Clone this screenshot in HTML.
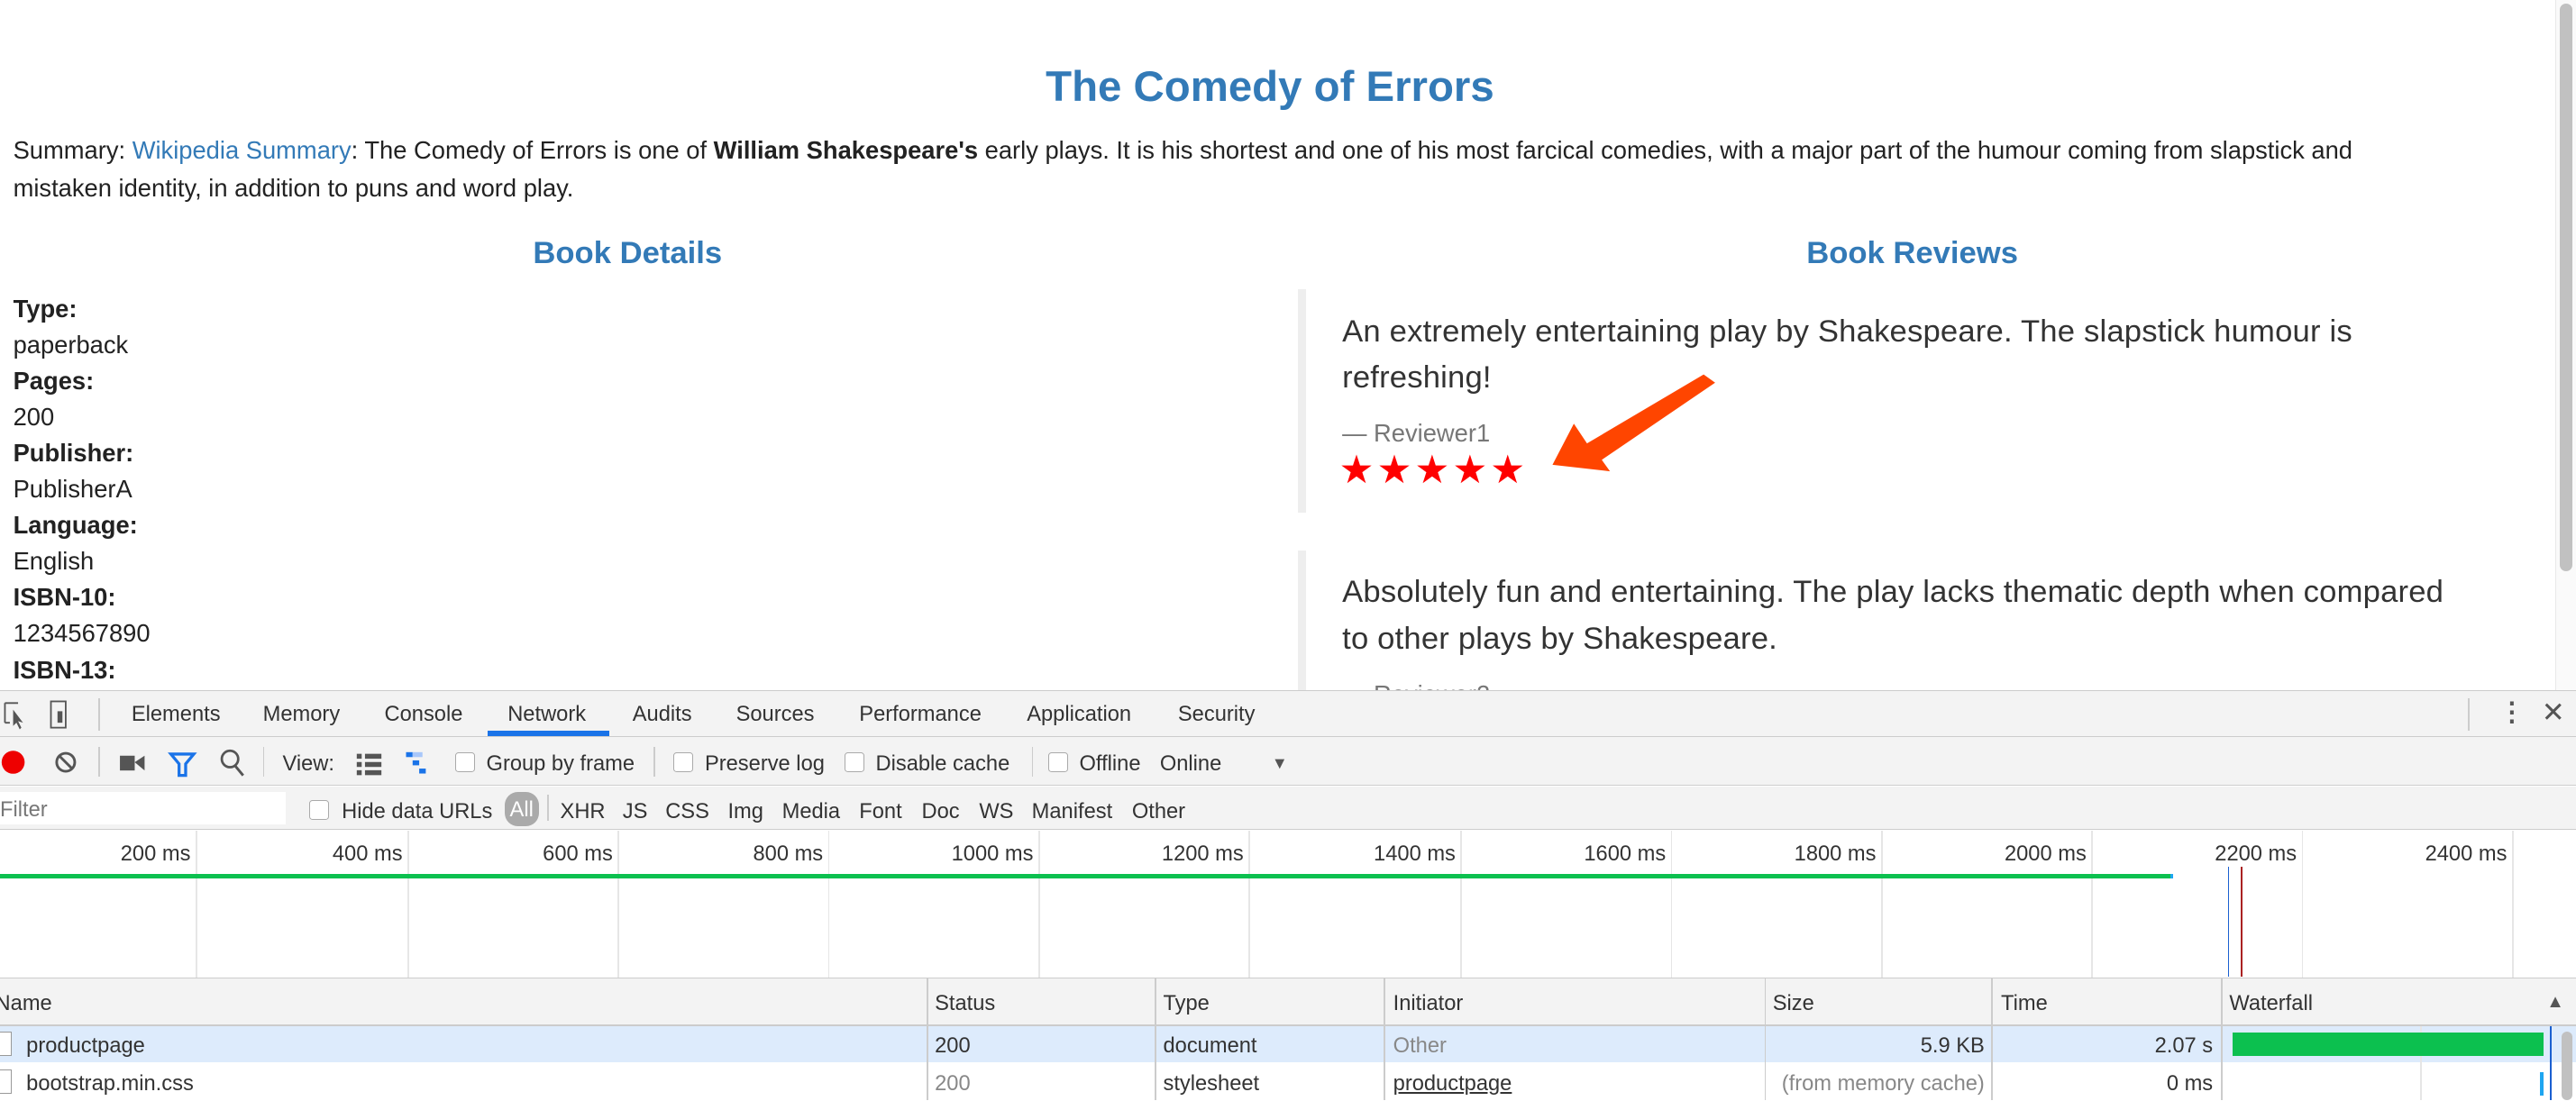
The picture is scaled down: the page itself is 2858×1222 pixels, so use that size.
<!DOCTYPE html>
<html><head><meta charset="utf-8"><style>
html,body{margin:0;padding:0;}
body{width:2858px;height:1222px;overflow:hidden;background:#fff;}
#w{width:1568px;height:670px;zoom:1.82270;position:relative;font-family:"Liberation Sans",Arial,sans-serif;color:#333;overflow:hidden;}
.a{position:absolute;white-space:nowrap;}
.blue{color:#337ab7;}
.t13{font-size:13px;color:#333;margin-top:2px;}
.cb{position:absolute;width:11px;height:11px;border:1px solid #aaa;border-radius:2px;background:#fff;margin-top:1px;}
.vl{position:absolute;width:1px;background:#ccc;}
.gl{position:absolute;top:506px;height:89px;width:1px;background:#e6e6e6;}
.tl{position:absolute;top:513px;font-size:13px;color:#333;text-align:right;width:100px;}
.ch{position:absolute;top:596px;height:28px;width:1px;background:#ccc;}
.cr{position:absolute;top:625px;height:45px;width:1px;background:#ccc;}
</style></head><body><div id="w">
<div class="a blue" style="left:0;width:1546px;text-align:center;top:38px;font-size:26px;font-weight:bold;">The Comedy of Errors</div>
<div class="a" style="left:8px;top:80px;font-size:15px;line-height:23px;color:#222;white-space:normal;width:1478px;">Summary: <span class="blue">Wikipedia Summary</span>: The Comedy of Errors is one of <b>William Shakespeare's</b> early plays. It is his shortest and one of his most farcical comedies, with a major part of the humour coming from slapstick and mistaken identity, in addition to puns and word play.</div>
<div class="a" style="right:0;top:0;width:12px;height:420px;background:#fafafa;border-left:1px solid #e8e8e8"></div>
<div class="a" style="left:1558px;top:2px;width:8px;height:346px;background:#c1c1c1;border-radius:4px"></div>
<div class="a blue" style="left:182px;width:400px;text-align:center;top:144px;font-size:19px;font-weight:bold;">Book Details</div>
<div class="a blue" style="left:964px;width:400px;text-align:center;top:144px;font-size:19px;font-weight:bold;">Book Reviews</div>
<div class="a" style="left:8px;top:177px;font-size:15px;line-height:22px;color:#222;">
<b>Type:</b><br>paperback<br><b>Pages:</b><br>200<br><b>Publisher:</b><br>PublisherA<br><b>Language:</b><br>English<br><b>ISBN-10:</b><br>1234567890<br><b>ISBN-13:</b></div>
<div class="a" style="left:790px;top:176px;width:5px;height:136px;background:#eee"></div>
<div class="a" style="left:790px;top:335px;width:5px;height:90px;background:#eee"></div>
<div class="a" style="left:817px;top:188px;font-size:19px;line-height:28px;color:#333;letter-spacing:0.1px">An extremely entertaining play by Shakespeare. The slapstick humour is<br>refreshing!</div>
<div class="a" style="left:817px;top:255px;font-size:15px;color:#777;">— Reviewer1</div>
<div class="a" style="left:815px;top:272px;font-size:24px;color:#f00;letter-spacing:1.5px;">★★★★★</div>
<div class="a" style="left:817px;top:347px;font-size:19px;line-height:28px;color:#333;letter-spacing:0.1px">Absolutely fun and entertaining. The play lacks thematic depth when compared<br>to other plays by Shakespeare.</div>
<div class="a" style="left:817px;top:414px;font-size:15px;color:#777;">— Reviewer2</div>
<svg class="a" style="left:0;top:0" width="1568" height="670">
<polygon points="1037,228 1044,233 975,280 980,287 945,283 958,258 966,270" fill="#ff4500"/>
<polygon points="1203,563 1207,561 1276,605 1280,596 1292,626 1260,622 1270,612" fill="#ff4500"/>
</svg>
<!-- devtools -->
<div class="a" style="left:0;top:420px;width:1568px;height:250px;background:#fff;border-top:1px solid #ccc"></div>
<div class="a" style="left:0;top:421px;width:1568px;height:27px;background:#f3f3f3;border-bottom:1px solid #ccc"></div>
<div class="a" style="left:0;top:449px;width:1568px;height:29px;background:#f3f3f3;border-bottom:1px solid #ccc"></div>
<div class="a" style="left:0;top:479px;width:1568px;height:26px;background:#f3f3f3;border-bottom:1px solid #ccc"></div>
<svg class="a" style="left:0;top:424px" width="60" height="22"><path d="M3 4h8M3 4v12M3 16h3" stroke="#555" fill="none"/><path d="M8 8l6 8-3-1 2 4-1 1-2-4-2 2z" fill="#555"/><rect x="31" y="3" width="9" height="16" fill="none" stroke="#555"/><rect x="35" y="9" width="3" height="7" fill="#555"/></svg>
<div class="vl" style="left:60px;top:425px;height:20px"></div>
<div class="a t13" style="left:80px;top:426px">Elements</div>
<div class="a t13" style="left:160px;top:426px">Memory</div>
<div class="a t13" style="left:234px;top:426px">Console</div>
<div class="a t13" style="left:309px;top:426px">Network</div>
<div class="a" style="left:297px;top:445px;width:74px;height:3px;background:#1a73e8"></div>
<div class="a t13" style="left:385px;top:426px">Audits</div>
<div class="a t13" style="left:448px;top:426px">Sources</div>
<div class="a t13" style="left:523px;top:426px">Performance</div>
<div class="a t13" style="left:625px;top:426px">Application</div>
<div class="a t13" style="left:717px;top:426px">Security</div>
<div class="vl" style="left:1502px;top:425px;height:20px"></div>
<div class="a" style="left:1521px;top:424px;font-size:16px;color:#555;font-weight:bold">⋮</div>
<div class="a" style="left:1547px;top:424px;font-size:17px;color:#555">✕</div>
<!-- toolbar -->
<svg class="a" style="left:0;top:453px" width="160" height="24"><circle cx="8" cy="11" r="7" fill="#e00"/><circle cx="40" cy="11" r="5.5" fill="none" stroke="#555" stroke-width="1.6"/><path d="M36 7l8 8" stroke="#555" stroke-width="1.6"/><rect x="73" y="7" width="9" height="9" fill="#555"/><path d="M82 11l6-4v9z" fill="#555"/><path d="M104 6h14l-5 6v7h-4v-7z" fill="none" stroke="#1a73e8" stroke-width="1.8"/><circle cx="140" cy="9" r="5" fill="none" stroke="#555" stroke-width="1.5"/><path d="M143 13l5 6" stroke="#555" stroke-width="1.6"/></svg>
<div class="vl" style="left:60px;top:455px;height:18px"></div>
<div class="vl" style="left:160px;top:455px;height:18px"></div>
<div class="a t13" style="left:172px;top:456px">View:</div>
<svg class="a" style="left:216px;top:457px" width="52" height="16"><rect x="1" y="2" width="3" height="3" fill="#555"/><rect x="6" y="2" width="10" height="3" fill="#555"/><rect x="1" y="7" width="3" height="3" fill="#555"/><rect x="6" y="7" width="10" height="3" fill="#555"/><rect x="1" y="12" width="3" height="3" fill="#555"/><rect x="6" y="12" width="10" height="3" fill="#555"/><rect x="31" y="1" width="4" height="3" fill="#1a73e8"/><rect x="35" y="1" width="6" height="3" fill="#a8c7fa"/><rect x="35" y="6" width="4" height="3" fill="#1a73e8"/><rect x="39" y="11" width="4" height="3" fill="#1a73e8"/></svg>
<div class="cb" style="left:277px;top:457px"></div><div class="a t13" style="left:296px;top:456px">Group by frame</div>
<div class="vl" style="left:398px;top:455px;height:18px"></div>
<div class="cb" style="left:410px;top:457px"></div><div class="a t13" style="left:429px;top:456px">Preserve log</div>
<div class="cb" style="left:514px;top:457px"></div><div class="a t13" style="left:533px;top:456px">Disable cache</div>
<div class="vl" style="left:628px;top:455px;height:18px"></div>
<div class="cb" style="left:638px;top:457px"></div><div class="a t13" style="left:657px;top:456px">Offline</div>
<div class="a t13" style="left:706px;top:456px">Online</div>
<div class="a" style="left:774px;top:459px;font-size:10px;color:#555">▼</div>
<!-- filter row -->
<div class="a" style="left:0;top:482px;width:174px;height:20px;background:#fff"></div>
<div class="a" style="left:0;top:486px;font-size:13px;color:#777">Filter</div>
<div class="cb" style="left:188px;top:486px"></div><div class="a t13" style="left:208px;top:485px">Hide data URLs</div>
<div class="a" style="left:307px;top:482px;width:21px;height:21px;border-radius:8px;background:#aaa;color:#fff;font-size:13px;text-align:center;line-height:22px">All</div>
<div class="vl" style="left:333px;top:484px;height:16px"></div>
<div class="a t13" style="left:341px;top:485px">XHR</div>
<div class="a t13" style="left:379px;top:485px">JS</div>
<div class="a t13" style="left:405px;top:485px">CSS</div>
<div class="a t13" style="left:443px;top:485px">Img</div>
<div class="a t13" style="left:476px;top:485px">Media</div>
<div class="a t13" style="left:523px;top:485px">Font</div>
<div class="a t13" style="left:561px;top:485px">Doc</div>
<div class="a t13" style="left:596px;top:485px">WS</div>
<div class="a t13" style="left:628px;top:485px">Manifest</div>
<div class="a t13" style="left:689px;top:485px">Other</div>
<!-- timeline -->
<div class="gl" style="left:119px"></div><div class="gl" style="left:248px"></div><div class="gl" style="left:376px"></div><div class="gl" style="left:504px"></div><div class="gl" style="left:632px"></div><div class="gl" style="left:760px"></div><div class="gl" style="left:889px"></div><div class="gl" style="left:1017px"></div><div class="gl" style="left:1145px"></div><div class="gl" style="left:1273px"></div><div class="gl" style="left:1401px"></div><div class="gl" style="left:1529px"></div>
<div class="tl" style="left:16px">200 ms</div><div class="tl" style="left:145px">400 ms</div><div class="tl" style="left:273px">600 ms</div><div class="tl" style="left:401px">800 ms</div><div class="tl" style="left:529px">1000 ms</div><div class="tl" style="left:657px">1200 ms</div><div class="tl" style="left:786px">1400 ms</div><div class="tl" style="left:914px">1600 ms</div><div class="tl" style="left:1042px">1800 ms</div><div class="tl" style="left:1170px">2000 ms</div><div class="tl" style="left:1298px">2200 ms</div><div class="tl" style="left:1426px">2400 ms</div>
<div class="a" style="left:0;top:532px;width:1321px;height:3px;background:#0cc04f"></div>
<div class="a" style="left:1321px;top:532px;width:2px;height:3px;background:#1ea5f0"></div>
<div class="a" style="left:1356px;top:528px;width:1px;height:67px;background:#1a5fd0"></div>
<div class="a" style="left:1364px;top:528px;width:1px;height:67px;background:#a22"></div>
<!-- table -->
<div class="a" style="left:0;top:595px;width:1568px;height:28px;background:#f3f3f3;border-top:1px solid #ccc;border-bottom:2px solid #ccc"></div>
<div class="ch" style="left:564px"></div><div class="ch" style="left:703px"></div><div class="ch" style="left:842px"></div><div class="ch" style="left:1074px"></div><div class="ch" style="left:1212px"></div><div class="ch" style="left:1352px"></div>
<div class="a t13" style="left:-3px;top:602px">Name</div>
<div class="a t13" style="left:569px;top:602px">Status</div>
<div class="a t13" style="left:708px;top:602px">Type</div>
<div class="a t13" style="left:848px;top:602px">Initiator</div>
<div class="a t13" style="left:1079px;top:602px">Size</div>
<div class="a t13" style="left:1218px;top:602px">Time</div>
<div class="a t13" style="left:1357px;top:602px">Waterfall</div>
<div class="a" style="left:1550px;top:604px;font-size:11px;color:#555">▲</div>
<div class="a" style="left:0;top:625px;width:1568px;height:22px;background:#ddebfc"></div>
<div class="cr" style="left:564px"></div><div class="cr" style="left:703px"></div><div class="cr" style="left:842px"></div><div class="cr" style="left:1074px"></div><div class="cr" style="left:1212px"></div><div class="cr" style="left:1352px"></div><div class="cr" style="left:1473px;background:#e6e6e6"></div>
<div class="a" style="left:-1px;top:628px;width:7px;height:14px;border:1px solid #999;background:#fff"></div>
<div class="a" style="left:-1px;top:651px;width:7px;height:14px;border:1px solid #999;background:#fff"></div>
<div class="a t13" style="left:16px;top:628px">productpage</div>
<div class="a t13" style="left:569px;top:628px">200</div>
<div class="a t13" style="left:708px;top:628px">document</div>
<div class="a t13" style="left:848px;top:628px;color:#888">Other</div>
<div class="a t13" style="left:1008px;width:200px;text-align:right;top:628px">5.9 KB</div>
<div class="a t13" style="left:1147px;width:200px;text-align:right;top:628px">2.07 s</div>
<div class="a" style="left:1359px;top:629px;width:189px;height:14px;background:#0cc04f"></div>
<div class="a t13" style="left:16px;top:651px">bootstrap.min.css</div>
<div class="a t13" style="left:569px;top:651px;color:#888">200</div>
<div class="a t13" style="left:708px;top:651px">stylesheet</div>
<div class="a t13" style="left:848px;top:651px;text-decoration:underline">productpage</div>
<div class="a t13" style="left:1008px;width:200px;text-align:right;top:651px;color:#888">(from memory cache)</div>
<div class="a t13" style="left:1147px;width:200px;text-align:right;top:651px">0 ms</div>
<div class="a" style="left:1546px;top:653px;width:2px;height:14px;background:#1ea5f0"></div>
<div class="a" style="left:1552px;top:625px;width:1px;height:45px;background:#1a5fd0"></div>
<div class="a" style="left:1559px;top:628px;width:7px;height:42px;background:#c1c1c1;border-radius:4px"></div>
</div></body></html>
